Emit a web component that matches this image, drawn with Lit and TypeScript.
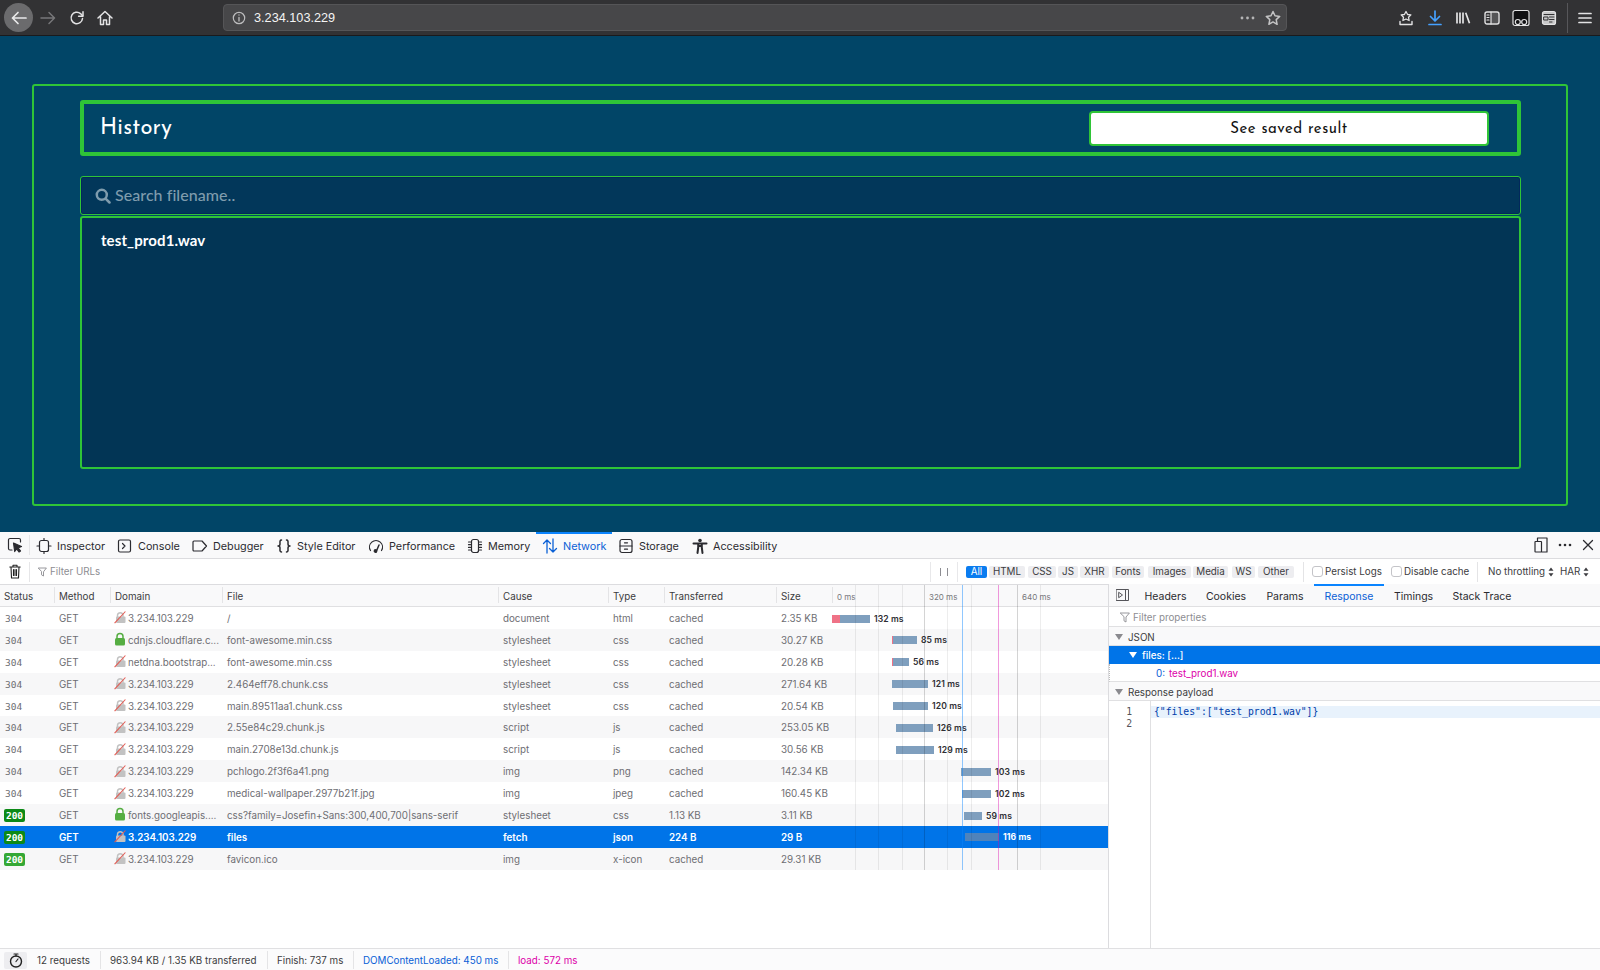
import { LitElement, html, css, svg } from "lit";
import { customElement } from "lit/decorators.js";

const ui = (w: number, h: number, body: unknown, cls = "ic") =>
  html`<svg class=${cls} width=${w} height=${h} viewBox="0 0 ${w} ${h}" fill="none" stroke="currentColor" stroke-width="1.2" stroke-linecap="round" stroke-linejoin="round">${body}</svg>`;

const ICONS: Record<string, unknown> = {
  inspector: svg`<rect x="3.500" y="2.500" width="9" height="11" rx="2"/><path d="M1 8h2.500M12.500 8H15M8 .5v2M8 13.500v2"/>`,
  console: svg`<rect x="1.500" y="2" width="12" height="12" rx="1.500"/><path d="M5.500 5.500l2.500 2.500-2.500 2.500"/>`,
  debugger: svg`<path d="M2 3h8l4.500 5-4.500 5H2a1 1 0 0 1-1-1V4a1 1 0 0 1 1-1z"/>`,
  style: svg`<path d="M5.500 2C3.500 2 4 4 4 6s-2 2-2 2 2 0 2 2-.5 4 1.500 4M10.500 2c2 0 1.500 2 1.500 4s2 2 2 2-2 0-2 2 .5 4-1.500 4" stroke-width="1.500"/>`,
  perf: svg`<path d="M2.500 12.500A6.500 6.500 0 1 1 13.500 12.500"/><path d="M8 14l3-7" stroke-width="1.500"/><circle cx="7.500" cy="13" r="1.300" fill="currentColor"/>`,
  memory: svg`<rect x="4.500" y="1.500" width="7" height="13" rx="2"/><path d="M1.500 4h2M1.500 6.700h2M1.500 9.400h2M1.500 12h2M12.500 4h2M12.500 6.700h2M12.500 9.400h2M12.500 12h2"/>`,
  network: svg`<path d="M5 15V2M1.500 5.500L5 2l3.500 3.500M11 1v13M7.500 10.500L11 14l3.500-3.500" stroke-width="1.300"/>`,
  storage: svg`<rect x="2" y="1.500" width="12" height="13" rx="2"/><path d="M2 8h12M6.500 4.800h3M6.500 11.200h3"/>`,
  a11y: svg`<circle cx="8" cy="2.500" r="1.800" fill="currentColor" stroke="none"/><path d="M1.500 5.500h13M6.200 6v3.500L5.500 15M9.800 6v3.500l.7 5.500M6.200 8h3.600" stroke-width="2"/>`,
};

const TABS = [
  { n: "Inspector", i: "inspector", w: 81 },
  { n: "Console", i: "console", w: 75 },
  { n: "Debugger", i: "debugger", w: 84 },
  { n: "Style Editor", i: "style", w: 92 },
  { n: "Performance", i: "perf", w: 99 },
  { n: "Memory", i: "memory", w: 75 },
  { n: "Network", i: "network", w: 76, on: true },
  { n: "Storage", i: "storage", w: 74 },
  { n: "Accessibility", i: "a11y", w: 100 },
];

const FILTERS = [
  { n: "All", w: 21, m: 2, on: true }, { n: "HTML", w: 36, m: 3 }, { n: "CSS", w: 28, m: 2 }, { n: "JS", w: 20, m: 2 },
  { n: "XHR", w: 29, m: 3 }, { n: "Fonts", w: 32, m: 4 }, { n: "Images", w: 43, m: 2 }, { n: "Media", w: 35, m: 4 },
  { n: "WS", w: 23, m: 3 }, { n: "Other", w: 36, m: 0 },
];

const HEAD = ["Status", "Method", "Domain", "File", "Cause", "Type", "Transferred", "Size"];

const D = "3.234.103.229";
const ROWS = [
  { s: 304, sec: false, d: D, f: "/", c: "document", t: "html", x: "cached", z: "2.35 KB", a: 832, b: 870, p: 8, l: "132 ms" },
  { s: 304, sec: true, d: "cdnjs.cloudflare.c...", f: "font-awesome.min.css", c: "stylesheet", t: "css", x: "cached", z: "30.27 KB", a: 892, b: 917, p: 1, l: "85 ms" },
  { s: 304, sec: false, d: "netdna.bootstrap...", f: "font-awesome.min.css", c: "stylesheet", t: "css", x: "cached", z: "20.28 KB", a: 892, b: 909, p: 1, l: "56 ms" },
  { s: 304, sec: false, d: D, f: "2.464eff78.chunk.css", c: "stylesheet", t: "css", x: "cached", z: "271.64 KB", a: 892, b: 928, p: 0, l: "121 ms" },
  { s: 304, sec: false, d: D, f: "main.89511aa1.chunk.css", c: "stylesheet", t: "css", x: "cached", z: "20.54 KB", a: 893, b: 928, p: 0, l: "120 ms" },
  { s: 304, sec: false, d: D, f: "2.55e84c29.chunk.js", c: "script", t: "js", x: "cached", z: "253.05 KB", a: 896, b: 933, p: 0, l: "126 ms" },
  { s: 304, sec: false, d: D, f: "main.2708e13d.chunk.js", c: "script", t: "js", x: "cached", z: "30.56 KB", a: 896, b: 934, p: 0, l: "129 ms" },
  { s: 304, sec: false, d: D, f: "pchlogo.2f3f6a41.png", c: "img", t: "png", x: "cached", z: "142.34 KB", a: 961, b: 991, p: 0, l: "103 ms" },
  { s: 304, sec: false, d: D, f: "medical-wallpaper.2977b21f.jpg", c: "img", t: "jpeg", x: "cached", z: "160.45 KB", a: 962, b: 991, p: 0, l: "102 ms" },
  { s: 200, sec: true, d: "fonts.googleapis....", f: "css?family=Josefin+Sans:300,400,700|sans-serif", c: "stylesheet", t: "css", x: "1.13 KB", z: "3.11 KB", a: 964, b: 982, p: 0, l: "59 ms" },
  { s: 200, sec: false, d: D, f: "files", c: "fetch", t: "json", x: "224 B", z: "29 B", a: 965, b: 999, p: 0, l: "116 ms", sel: true },
  { s: 200, sec: false, d: D, f: "favicon.ico", c: "img", t: "x-icon", x: "cached", z: "29.31 KB", a: 0, b: 0, p: 0, l: "" },
];

const GRID_LINES = [
  { x: 855, k: "" }, { x: 878, k: "" }, { x: 902, k: "" }, { x: 924, k: "dark" }, { x: 947, k: "" },
  { x: 962, k: "blue" }, { x: 971, k: "" }, { x: 998, k: "pink" }, { x: 1017, k: "dark" }, { x: 1040, k: "" },
];

const lock = (secure: boolean) => secure
  ? html`<svg class="lock" width="12" height="14" viewBox="0 0 12 14"><path d="M3 7V4.500a3 3 0 0 1 6 0V7" fill="none" stroke="#55ad42" stroke-width="1.500"/><rect x="1" y="6" width="10" height="7.500" rx="1.500" fill="#55ad42"/></svg>`
  : html`<svg class="lock" width="12" height="14" viewBox="0 0 12 14"><path d="M3.500 7V5a2.800 2.800 0 0 1 5.500 0v2" fill="none" stroke="#c2c2c2" stroke-width="1.400"/><rect x="2" y="6.500" width="9.500" height="6.500" rx="1" fill="#c2c2c2"/><path d="M.6 13.200L11.400 1.500" stroke="#e35a52" stroke-width="1.100"/></svg>`;

const triangle = () => html`<svg class="tri" width="8" height="6" viewBox="0 0 8 6"><path d="M0 0h8L4 6z" fill="currentColor"/></svg>`;

const updown = () => ui(6, 10, svg`<path d="M3 .5L5.500 3.800H.5zM3 9.500L.5 6.200H5.500z" fill="currentColor" stroke="none"/>`);

@customElement("app-root")
export class AppRoot extends LitElement {
  static styles = css`
    :host { display: flex; flex-direction: column; width: 1600px; height: 970px; overflow: hidden; font-family: Inter, "Liberation Sans", sans-serif; background: #fff; }
    * { box-sizing: border-box; }
    svg { display: block; flex: none; }

    .chrome { height: 36px; flex: none; background: #323234; border-bottom: 1px solid #1a1a1c; display: flex; align-items: center; color: #e3e3e4; }
    .back { width: 29px; height: 29px; border-radius: 50%; background: #6b6b6d; display: flex; align-items: center; justify-content: center; margin-left: 4px; }
    .fwd { width: 30px; color: #777779; display: flex; justify-content: center; }
    .btn30 { width: 28px; display: flex; justify-content: center; }
    .url { width: 1064px; margin-left: 104px; height: 27px; background: #474749; border: 1px solid #555557; border-radius: 4px; display: flex; align-items: center; padding: 0 5px 0 8px; font-family: "Liberation Sans", sans-serif; font-size: 12.700px; color: #f4f4f4; }
    .url .info { margin-right: 8px; color: #bdbdbe; }
    .url .spacer { flex: 1; }
    .url .dots { margin-right: 10px; color: #b5b5b6; }
    .tools { display: flex; margin-left: 105px; align-items: center; }
    .tool { width: 28.600px; display: flex; justify-content: center; }
    .tool.dl { color: #45a1ff; }
    .sep { width: 1px; height: 30px; background: #57575a; margin: 0 10px 0 3px; }

    .page { height: 496px; flex: none; background: #014567; padding: 48px 32px 0 32px; }
    .outer { height: 422px; border: 2px solid #2fc437; border-radius: 3px; padding: 14px 45px 0 46px; }
    .hist { height: 56px; border: 4px solid #2fc437; border-radius: 3px; display: flex; align-items: center; justify-content: space-between; padding: 0 28px 0 15px; font-family: "Josefin Sans", Lato, sans-serif; }
    .hist h1 { margin: 0 0 0 1px; font-size: 22px; font-weight: 400; color: #fff; letter-spacing: .2px; }
    .see { width: 400px; height: 35px; background: #fff; border: 2px solid #2fc437; border-radius: 4px; color: #111; font-size: 15px; letter-spacing: .5px; display: flex; align-items: center; justify-content: center; padding-top: 3px; }
    .search { margin-top: 20px; height: 39px; background: #02375a; border: 1px solid #2fc437; box-shadow: inset 0 0 0 1px #02285c; border-radius: 3px; display: flex; align-items: center; padding: 0 14px; gap: 4px; color: #7f9cad; font-family: Lato, sans-serif; font-size: 16px; font-weight: 500; letter-spacing: .05px; }
    .search span { margin-top: -2px; }
    .list { margin-top: 1px; height: 253px; background: #023555; border: 2px solid #2fc437; border-radius: 3px; padding: 13px 19px; color: #fff; font-family: Lato, sans-serif; font-size: 15px; font-weight: 700; letter-spacing: .1px; }

    .dev { flex: 1; display: flex; flex-direction: column; min-height: 0; font-size: 10.500px; color: #38383d; position: relative; background: #fff; }
    .tabs { height: 27px; flex: none; background: #f9f9fa; border-bottom: 1px solid #dcdcdf; display: flex; align-items: stretch; color: #2b2b30; }
    .picker { width: 30px; display: flex; align-items: center; justify-content: center; border-right: 1px solid #e6e6e8; margin: 3px 0; }
    .tab { display: flex; align-items: center; gap: 5px; padding-left: 6px; font-size: 10.800px; white-space: nowrap; border-top: 2px solid transparent; }
    .tab.on { color: #0a60d6; border-top-color: #0a84ff; }
    .tab-right { margin-left: auto; display: flex; align-items: center; gap: 10px; padding-right: 6px; }
    .bar { height: 26px; flex: none; background: #fff; border-bottom: 1px solid #dcdcdf; display: flex; align-items: center; font-size: 9.800px; }
    .trash { width: 30px; height: 20px; border-right: 1px solid #e6e6e8; display: flex; justify-content: center; align-items: center; color: #222; }
    .hint { width: 900px; color: #8d8d92; display: flex; align-items: center; gap: 3px; padding-left: 8px; }
    .pause { width: 28px; height: 20px; border-left: 1px solid #e8e8ea; border-right: 1px solid #e8e8ea; display: flex; justify-content: center; align-items: center; gap: 6px; }
    .pause i { width: 1px; height: 8px; background: #8d8d92; }
    .chips { display: flex; width: 345px; padding-left: 8px; }
    .chip { height: 12px; border-radius: 2px; background: #ededf0; text-align: center; line-height: 12px; color: #3c3c40; font-size: 9.800px; white-space: nowrap; flex: none; }
    .chip.on { background: #0a7cf0; color: #fff; }
    .vsep { width: 1px; height: 20px; background: #e4e4e6; flex: none; }
    .check { display: flex; align-items: center; gap: 2px; margin-left: 8px; color: #3c3c40; white-space: nowrap; flex: none; }
    .check.persist { width: 71px; }
    .check.cache { width: 78px; }
    .check i { width: 11px; height: 11px; border: 1px solid #c4c4c8; border-radius: 3px; background: #fff; flex: none; }
    .sep-b { margin-left: 8px; margin-right: 10px; }
    .sel { display: flex; align-items: center; gap: 3px; white-space: nowrap; color: #3c3c40; flex: none; }
    .sel.throttle { width: 72px; }

    .split { flex: 1; display: flex; min-height: 0; }
    .net { width: 1109px; flex: none; display: flex; flex-direction: column; position: relative; border-right: 1px solid #dcdcdf; }
    .row { display: grid; grid-template-columns: 59px 56px 112px 276px 110px 56px 112px 51px 1fr; align-items: center; white-space: nowrap; }
    .head { height: 22px; flex: none; background: #f9f9fa; border-bottom: 1px solid #e0e0e2; color: #3c3c40; font-size: 9.800px; padding-top: 2px; }
    .head > span { position: relative; height: 100%; display: flex; align-items: center; }
    .head > span::before { content: ""; position: absolute; left: -5px; top: 0; bottom: 3px; width: 1px; background: #e4e4e6; }
    .head > span:first-child { padding-left: 4px; }
    .head > span:first-child::before { display: none; }
    .head .wf { font-size: 8px; color: #77777b; padding-left: 5px; }
    .head .wf::before { left: 0; }
    .mark { position: absolute; top: 5px; color: #77777b; font-style: normal; }
    .m1 { left: 97px; }
    .m2 { left: 190px; }
    .r { height: 21.900px; flex: none; color: #6e6e73; font-size: 9.800px; position: relative; padding-top: 1px; }
    .r:nth-child(even) { background: #f7f7f8; }
    .r:nth-child(odd) { background: #fff; }
    .r.selrow { background: #0074e8; color: #fff; font-weight: 600; }
    .st { font-family: "DejaVu Sans Mono", monospace; font-size: 9.500px; padding-left: 5px; }
    .st b { display: inline-block; font-weight: 700; color: #fff; background: #35a835; border-radius: 2px; width: 21px; margin-left: -1px; text-align: center; line-height: 13px; font-size: 9.500px; }
    .st b.dark { background: #0d8a17; }
    .dom { display: flex; align-items: center; gap: 1px; margin-left: -1px; }
    .lock { margin: 0 1px 2px 0; }
    .tl { position: relative; height: 100%; margin-top: -1px; }
    .timing { position: absolute; top: 7px; height: 8px; background: #7f9fbe; display: flex; }
    .selrow .timing { background: #4f83bb; }
    .timing i { display: block; height: 100%; background: #ef7286; flex: none; }
    .ms { position: absolute; top: 0; line-height: 23px; font-size: 8.600px; font-weight: 600; color: #2e2e33; letter-spacing: .1px; }
    .selrow .ms { color: #fff; font-weight: 700; }
    .gl { position: absolute; top: 0; width: 1px; height: 285px; background: rgba(0,0,0,.07); pointer-events: none; }
    .gl.dark { background: rgba(0,0,0,.17); }
    .gl.blue { background: rgba(10,132,255,.45); }
    .gl.pink { background: rgba(221,0,169,.4); }
    .rows { position: relative; }

    .side { flex: 1; display: flex; flex-direction: column; margin-top: -1px; }
    .stabs { height: 23px; flex: none; background: #f9f9fa; border-bottom: 1px solid #e0e0e2; display: flex; align-items: stretch; font-size: 10.500px; color: #2b2b30; }
    .stabs .dock { width: 26px; display: flex; align-items: center; justify-content: center; color: #55555a; }
    .stab { display: flex; align-items: center; justify-content: center; border-top: 2px solid transparent; }
    .stab.on { color: #0a60d6; border-top-color: #0a84ff; }
    .fprop { height: 20px; flex: none; border-bottom: 1px solid #e0e0e2; display: flex; align-items: center; padding: 1px 0 0 11px; gap: 3px; color: #8d8d92; font-size: 9.800px; }
    .sec { height: 19px; flex: none; background: #f9f9fa; border-bottom: 1px solid #e0e0e2; display: flex; align-items: center; padding: 2px 0 0 6px; gap: 5px; color: #3c3c40; font-size: 9.800px; }
    .sec .tri { color: #8a8a8f; }
    .fl { height: 18px; flex: none; background: #0074e8; color: #fff; display: flex; align-items: center; padding-left: 20px; gap: 5px; font-size: 9.800px; font-weight: 500; }
    .idx { height: 18px; flex: none; border-bottom: 1px solid #e0e0e2; border-left: 1px dotted #bbb; display: flex; align-items: center; padding: 1px 0 0 46px; gap: 4px; font-size: 9.800px; color: #0a60d6; }
    .idx span { color: #dd00a9; }
    .code { flex: 1; display: grid; grid-template-columns: 42px 1fr; font-family: "DejaVu Sans Mono", monospace; font-size: 9.750px; line-height: 12px; color: #003eaa; }
    .gut { border-right: 1px solid #e0e0e2; padding: 5px 18px 0 0; text-align: right; color: #55555a; }
    .lines { padding-top: 5px; }
    .hl { background: #e8f2fc; padding-left: 3px; height: 12px; white-space: pre; }

    .foot { position: absolute; left: 0; right: 0; bottom: 0; height: 22px; background: #fbfbfc; border-top: 1px solid #e0e0e2; display: flex; align-items: center; font-size: 9.800px; color: #3c3c40; white-space: nowrap; padding-top: 1px; }
    .watch { width: 23px; height: 17px; margin-left: 4px; background: #ededf0; border-radius: 2px; display: flex; align-items: center; justify-content: center; color: #222; margin-right: 10px; }
    .fi { height: 18px; display: flex; align-items: center; }
    .fi.bl { border-left: 1px solid #e4e4e6; padding-left: 9px; }
    .f1 { width: 63px; }
    .f2 { width: 167px; }
    .f3 { width: 86px; }
    .f4 { width: 155px; color: #0a60d6; }
    .f5 { color: #dd00a9; }
  `;

  private renderChrome() {
    return html`<div class="chrome">
      <div class="back">${ui(16, 14, svg`<path d="M7 1.500L1.500 7 7 12.500M1.500 7H15" stroke-width="1.700" stroke="#e9e9ea"/>`)}</div>
      <div class="fwd">${ui(16, 14, svg`<path d="M9 1.500L14.500 7 9 12.500M14.500 7H1" stroke-width="1.500"/>`)}</div>
      <div class="btn30">${ui(16, 16, svg`<path d="M13.500 8.500A5.700 5.700 0 1 1 11.500 3.600L13.500 5.800" stroke-width="1.500"/><path d="M14 1.800V6.200H9.600" stroke-width="1.500"/>`)}</div>
      <div class="btn30">${ui(16, 16, svg`<path d="M1 8L8 1.500 15 8M3.500 6.500V14.500H6.500V10H9.500V14.500H12.500V6.500" stroke-width="1.500"/>`)}</div>
      <div class="url">
        <span class="info">${ui(14, 14, svg`<circle cx="7" cy="7" r="5.700"/><path d="M7 6.300V10M7 4V4.100" stroke-width="1.300"/>`)}</span>
        3.234.103.229
        <span class="spacer"></span>
        <span class="dots">${ui(15, 4, svg`<circle cx="2" cy="2" r="1.400" fill="currentColor" stroke="none"/><circle cx="7.500" cy="2" r="1.400" fill="currentColor" stroke="none"/><circle cx="13" cy="2" r="1.400" fill="currentColor" stroke="none"/>`)}</span>
        ${ui(16, 16, svg`<path d="M8 1.500l2 4.300 4.700.6-3.500 3.200.9 4.700L8 11.900l-4.100 2.400.9-4.700L1.300 6.400 6 5.800z" stroke-width="1.500" stroke="#c3c3c4"/>`)}
      </div>
      <div class="tools">
        <span class="tool">${ui(16, 16, svg`<path d="M8 1.500l1.600 3 3.300.4-2.400 2.300.6 3.300L8 9l-3.100 1.500.6-3.300-2.400-2.300 3.300-.4z" stroke-width="1.300"/><path d="M2 11.500V14.500H14V11.500" stroke-width="1.400"/>`)}</span>
        <span class="tool dl">${ui(16, 16, svg`<path d="M8 1V10.500M3.500 6.500L8 11 12.500 6.500M2 14.500H14" stroke-width="1.700"/>`)}</span>
        <span class="tool">${ui(16, 16, svg`<path d="M2 2.500V13.500M5 2.500V13.500M8 2.500V13.500M10.700 2.800L14.500 13.300" stroke-width="1.700" stroke-linecap="butt"/>`)}</span>
        <span class="tool">${ui(16, 16, svg`<rect x="1" y="2" width="14" height="12" rx="2" stroke-width="1.400"/><path d="M7 2V14"/><path d="M3 5H5M3 7.500H5M3 10H5"/><rect x="7" y="3" width="7.500" height="10" fill="currentColor" opacity=".2" stroke="none"/>`)}</span>
        <span class="tool">${ui(18, 18, svg`<path d="M3 1.500H15A2 2 0 0 1 17 3.500V14.500A2 2 0 0 1 15 16.500H3A2 2 0 0 1 1 14.500V3.500A2 2 0 0 1 3 1.500Z" fill="#101012"/><circle cx="5.800" cy="13" r="2.500"/><circle cx="12.200" cy="13" r="2.500"/>`)}</span>
        <span class="tool">${ui(16, 16, svg`<rect x="1.500" y="1.500" width="13" height="13" rx="2" fill="currentColor" fill-opacity=".85"/><path d="M3 4.500H13M8.500 7H13M8.500 9.500H13M8.500 12H11M3 7H7V10H3Z" stroke="#323234" stroke-width="1"/>`)}</span>
        <span class="sep"></span>
        ${ui(14, 12, svg`<path d="M1 1.500H13M1 6H13M1 10.500H13" stroke-width="1.700"/>`)}
      </div>
    </div>`;
  }

  private renderPage() {
    return html`<div class="page"><div class="outer">
      <div class="hist"><h1>History</h1><div class="see">See saved result</div></div>
      <div class="search">
        <svg width="16" height="16" viewBox="0 0 16 16" fill="none" stroke="currentColor" stroke-width="2.500" stroke-linecap="round"><circle cx="6.800" cy="6.800" r="5"/><path d="M10.800 10.800L14.500 14.500"/></svg>
        <span>Search filename..</span>
      </div>
      <div class="list">test_prod1.wav</div>
    </div></div>`;
  }

  private renderTabs() {
    return html`<div class="tabs">
      <div class="picker">${ui(16, 16, svg`<path d="M5 13H3a1.500 1.500 0 0 1-1.500-1.500V3A1.500 1.500 0 0 1 3 1.500h9A1.500 1.500 0 0 1 13.500 3v2"/><path d="M6.500 6l8 3.500-3.500 1.500 2.500 3-1.500 1-2.300-3-2 2.500z" fill="currentColor"/>`)}</div>
      ${TABS.map((t) => html`<div class="tab ${t.on ? "on" : ""}" style="width:${t.w}px">${ui(16, 16, ICONS[t.i])}<span>${t.n}</span></div>`)}
      <div class="tab-right">
        ${ui(14, 16, svg`<rect x="1" y="4.500" width="6.500" height="10.500" rx=".5"/><path d="M3.500 4.500V1H13V15H7.500" stroke-linecap="butt"/>`)}
        ${ui(14, 4, svg`<circle cx="2" cy="2" r="1.300" fill="currentColor" stroke="none"/><circle cx="7" cy="2" r="1.300" fill="currentColor" stroke="none"/><circle cx="12" cy="2" r="1.300" fill="currentColor" stroke="none"/>`)}
        ${ui(12, 12, svg`<path d="M1.500 1.500L10.500 10.500M10.500 1.500L1.500 10.500" stroke-width="1.300"/>`)}
      </div>
    </div>`;
  }

  private renderBar() {
    return html`<div class="bar">
      <div class="trash">${ui(12, 15, svg`<path d="M.8 3H11.200M4 3V1.200H8V3M2 3L2.500 14H9.500L10 3M4.500 5.500V11.500M6 5.500V11.500M7.500 5.500V11.500" stroke-width="1.100"/>`)}</div>
      <div class="hint">${ui(9, 10, svg`<path d="M.6 1H8.400L5.500 4.800V9L3.500 7.800V4.800Z" stroke-width=".9"/>`)}<span>Filter URLs</span></div>
      <div class="pause"><i></i><i></i></div>
      <div class="chips">${FILTERS.map((f) => html`<div class="chip ${f.on ? "on" : ""}" style="width:${f.w}px;margin-right:${f.m}px">${f.n}</div>`)}</div>
      <div class="vsep"></div>
      <label class="check persist"><i></i>Persist Logs</label>
      <label class="check cache"><i></i>Disable cache</label>
      <div class="vsep sep-b"></div>
      <div class="sel throttle">No throttling ${updown()}</div>
      <div class="sel">HAR ${updown()}</div>
    </div>`;
  }

  private renderNet() {
    return html`<div class="net">
      <div class="row head">
        ${HEAD.map((h) => html`<span>${h}</span>`)}
        <span class="wf">0 ms
          <em class="mark m1">320 ms</em>
          <em class="mark m2">640 ms</em>
        </span>
      </div>
      <div class="rows">
        ${ROWS.map((r) => html`<div class="row r ${r.sel ? "selrow" : ""}">
          <div class="st">${r.s === 304 ? "304" : html`<b class=${r.sel || r.sec ? "dark" : ""}>200</b>`}</div>
          <div>GET</div>
          <div class="dom">${lock(r.sec)}<span>${r.d}</span></div>
          <div>${r.f}</div>
          <div>${r.c}</div>
          <div>${r.t}</div>
          <div>${r.x}</div>
          <div>${r.z}</div>
          <div class="tl">
            ${r.b ? html`<div class="timing" style="left:${r.a - 832}px;width:${r.b - r.a}px"><i style="width:${r.p}px"></i></div>
            <span class="ms" style="left:${r.b - 832 + 4}px">${r.l}</span>` : ""}
          </div>
        </div>`)}
      </div>
      ${GRID_LINES.map((g) => html`<div class="gl ${g.k}" style="left:${g.x}px"></div>`)}
    </div>`;
  }

  private renderSide() {
    const tabs = [
      { n: "Headers", w: 61 }, { n: "Cookies", w: 60 }, { n: "Params", w: 58 },
      { n: "Response", w: 70, on: true }, { n: "Timings", w: 59 }, { n: "Stack Trace", w: 78 },
    ];
    return html`<div class="side">
      <div class="stabs">
        <div class="dock">${ui(13, 12, svg`<rect x=".5" y=".5" width="12" height="11" stroke-width="1"/><path d="M9.500 .5V11.500M3 3.500L6.500 6 3 8.500Z" stroke-width="1"/>`)}</div>
        ${tabs.map((t) => html`<div class="stab ${t.on ? "on" : ""}" style="width:${t.w}px">${t.n}</div>`)}
      </div>
      <div class="fprop">${ui(10, 11, svg`<path d="M.6 1H9.400L6 5V10L4 8.800V5Z" stroke-width=".9"/>`)}<span>Filter properties</span></div>
      <div class="sec">${triangle()}<span>JSON</span></div>
      <div class="fl">${triangle()}<span>files: […]</span></div>
      <div class="idx">0: <span>test_prod1.wav</span></div>
      <div class="sec">${triangle()}<span>Response payload</span></div>
      <div class="code">
        <div class="gut">1<br />2</div>
        <div class="lines"><div class="hl">{"files":["test_prod1.wav"]}</div></div>
      </div>
    </div>`;
  }

  render() {
    return html`
      ${this.renderChrome()}
      ${this.renderPage()}
      <div class="dev">
        ${this.renderTabs()}
        ${this.renderBar()}
        <div class="split">${this.renderNet()}${this.renderSide()}</div>
        <div class="foot">
          <div class="watch">${ui(14, 15, svg`<circle cx="7" cy="8.500" r="5.500" stroke-width="1.400"/><path d="M5 1H9M7 1V3M7 8.500L9 6"/>`)}</div>
          <div class="fi f1">12 requests</div>
          <div class="fi bl f2">963.94 KB / 1.35 KB transferred</div>
          <div class="fi bl f3">Finish: 737 ms</div>
          <div class="fi bl f4">DOMContentLoaded: 450 ms</div>
          <div class="fi bl f5">load: 572 ms</div>
        </div>
      </div>`;
  }
}
